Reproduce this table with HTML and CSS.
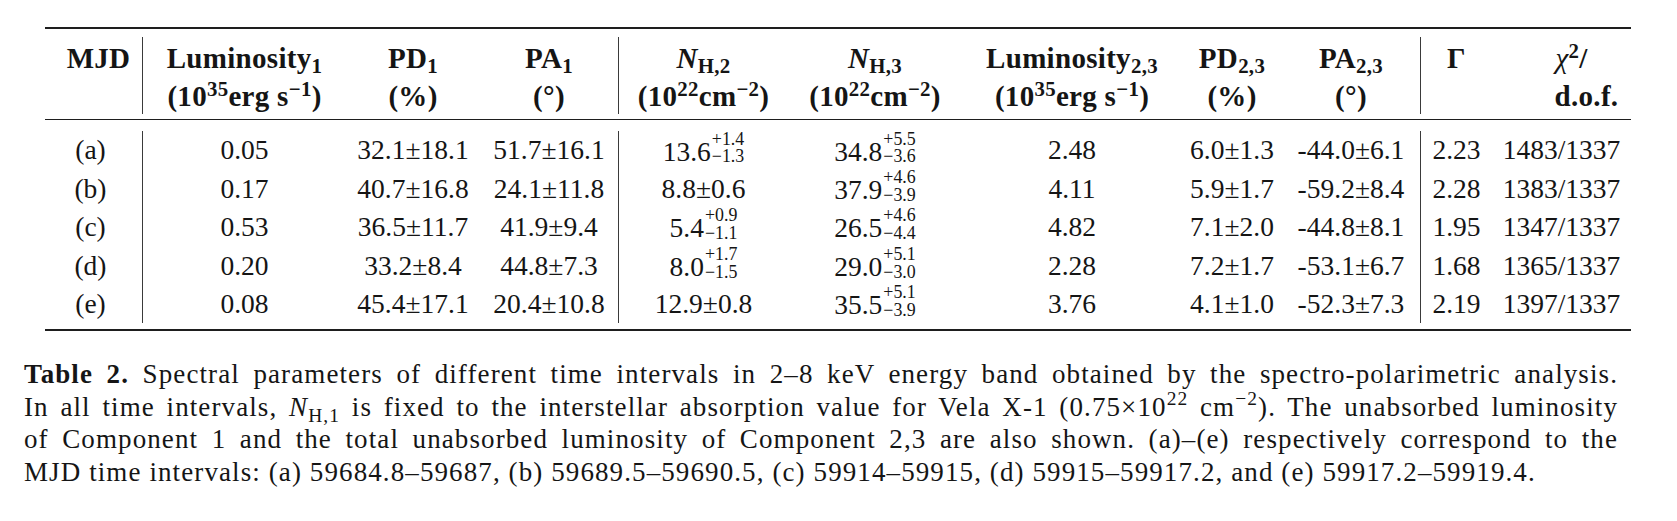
FILE: index.html
```html
<!DOCTYPE html>
<html>
<head>
    <meta name="viewport" content="width=device-width, initial-scale=1">
    <title>Table 2</title>
    <link rel="stylesheet" href="styles.css">
</head>
<body>
    <div class="page">
        <table class="data-table">
            <colgroup>
                <col style="width: 97px">
                <col style="width: 204px">
                <col style="width: 134px">
                <col style="width: 138px">
                <col style="width: 170px">
                <col style="width: 174px">
                <col style="width: 220px">
                <col style="width: 100px">
                <col style="width: 138px">
                <col style="width: 72px">
                <col style="width: 139px">
            </colgroup>
            <thead>
                <tr class="rule-row"><td colspan="11"><div class="rule rule-top"></div></td></tr>
                <tr class="head-1">
                    <th class="mjd-head">MJD</th>
                    <th class="sep">Luminosity<sub>1</sub></th>
                    <th>PD<sub>1</sub></th>
                    <th>PA<sub>1</sub></th>
                    <th class="sep"><i>N</i><sub>H,2</sub></th>
                    <th><i>N</i><sub>H,3</sub></th>
                    <th>Luminosity<sub>2,3</sub></th>
                    <th>PD<sub>2,3</sub></th>
                    <th>PA<sub>2,3</sub></th>
                    <th class="sep">&Gamma;</th>
                    <th class="chi-head"><i class="chi">&chi;</i><sup>2</sup>/</th>
                </tr>
                <tr class="head-2">
                    <th></th>
                    <th class="sep">(10<sup>35</sup>erg s<sup>&minus;1</sup>)</th>
                    <th>(%)</th>
                    <th>(&deg;)</th>
                    <th class="sep">(10<sup>22</sup>cm<sup>&minus;2</sup>)</th>
                    <th>(10<sup>22</sup>cm<sup>&minus;2</sup>)</th>
                    <th>(10<sup>35</sup>erg s<sup>&minus;1</sup>)</th>
                    <th>(%)</th>
                    <th>(&deg;)</th>
                    <th class="sep"></th>
                    <th class="dof-head">d.o.f.</th>
                </tr>
                <tr class="rule-row"><td colspan="11"><div class="rule rule-mid"></div></td></tr>
            </thead>
            <tbody>
                <tr>
                    <td class="mjd">(a)</td>
                    <td class="sep">0.05</td>
                    <td>32.1&plusmn;18.1</td>
                    <td>51.7&plusmn;16.1</td>
                    <td class="sep">13.6<span class="err"><span>+1.4</span><span>&minus;1.3</span></span></td>
                    <td>34.8<span class="err"><span>+5.5</span><span>&minus;3.6</span></span></td>
                    <td>2.48</td>
                    <td>6.0&plusmn;1.3</td>
                    <td>-44.0&plusmn;6.1</td>
                    <td class="sep">2.23</td>
                    <td>1483/1337</td>
                </tr>
                <tr>
                    <td class="mjd">(b)</td>
                    <td class="sep">0.17</td>
                    <td>40.7&plusmn;16.8</td>
                    <td>24.1&plusmn;11.8</td>
                    <td class="sep">8.8&plusmn;0.6</td>
                    <td>37.9<span class="err"><span>+4.6</span><span>&minus;3.9</span></span></td>
                    <td>4.11</td>
                    <td>5.9&plusmn;1.7</td>
                    <td>-59.2&plusmn;8.4</td>
                    <td class="sep">2.28</td>
                    <td>1383/1337</td>
                </tr>
                <tr>
                    <td class="mjd">(c)</td>
                    <td class="sep">0.53</td>
                    <td>36.5&plusmn;11.7</td>
                    <td>41.9&plusmn;9.4</td>
                    <td class="sep">5.4<span class="err"><span>+0.9</span><span>&minus;1.1</span></span></td>
                    <td>26.5<span class="err"><span>+4.6</span><span>&minus;4.4</span></span></td>
                    <td>4.82</td>
                    <td>7.1&plusmn;2.0</td>
                    <td>-44.8&plusmn;8.1</td>
                    <td class="sep">1.95</td>
                    <td>1347/1337</td>
                </tr>
                <tr>
                    <td class="mjd">(d)</td>
                    <td class="sep">0.20</td>
                    <td>33.2&plusmn;8.4</td>
                    <td>44.8&plusmn;7.3</td>
                    <td class="sep">8.0<span class="err"><span>+1.7</span><span>&minus;1.5</span></span></td>
                    <td>29.0<span class="err"><span>+5.1</span><span>&minus;3.0</span></span></td>
                    <td>2.28</td>
                    <td>7.2&plusmn;1.7</td>
                    <td>-53.1&plusmn;6.7</td>
                    <td class="sep">1.68</td>
                    <td>1365/1337</td>
                </tr>
                <tr>
                    <td class="mjd">(e)</td>
                    <td class="sep">0.08</td>
                    <td>45.4&plusmn;17.1</td>
                    <td>20.4&plusmn;10.8</td>
                    <td class="sep">12.9&plusmn;0.8</td>
                    <td>35.5<span class="err"><span>+5.1</span><span>&minus;3.9</span></span></td>
                    <td>3.76</td>
                    <td>4.1&plusmn;1.0</td>
                    <td>-52.3&plusmn;7.3</td>
                    <td class="sep">2.19</td>
                    <td>1397/1337</td>
                </tr>
                <tr class="rule-row"><td colspan="11"><div class="rule rule-bottom"></div></td></tr>
            </tbody>
        </table>

        <p class="caption">
            <span class="line"><b>Table 2.</b> Spectral parameters of different time intervals in 2&ndash;8 keV energy band obtained by the spectro-polarimetric analysis.</span>
            <span class="line">In all time intervals, <i>N</i><sub>H,1</sub> is fixed to the interstellar absorption value for Vela X-1 (0.75&times;10<sup>22</sup> cm<sup>&minus;2</sup>). The unabsorbed luminosity</span>
            <span class="line">of Component 1 and the total unabsorbed luminosity of Component 2,3 are also shown. (a)&ndash;(e) respectively correspond to the</span>
            <span class="line last">MJD time intervals: (a) 59684.8&ndash;59687, (b) 59689.5&ndash;59690.5, (c) 59914&ndash;59915, (d) 59915&ndash;59917.2, and (e) 59917.2&ndash;59919.4.</span>
        </p>
    </div>
</body>
</html>
```

FILE: styles.css
```css
body {
    margin: 0;
    padding: 0;
    background-color: #ffffff;
    color: #151515;
    font-family: "Liberation Serif", "Times New Roman", serif;
}

.page {
    padding-top: 27px;
}

.data-table {
    margin-left: 45px;
    width: 1586px;
    table-layout: fixed;
    border-collapse: separate;
    border-spacing: 0;
    font-size: 27.5px;
}

.data-table th,
.data-table td {
    padding: 0;
    text-align: center;
    white-space: nowrap;
    line-height: 1;
}

.data-table .sep {
    border-left: 1px solid #3a3a3a;
}

.data-table .rule-row td {
    padding: 0;
    height: auto;
    vertical-align: top;
}

.rule {
    border-top: 2px solid #1e1e1e;
}

.rule-top {
    margin-bottom: 8px;
}

.rule-mid {
    border-top-width: 1px;
    margin-top: 5px;
    margin-bottom: 11px;
}

.rule-bottom {
    margin-top: 6px;
}

.head-1 th,
.head-2 th {
    font-size: 29px;
    font-weight: bold;
    letter-spacing: 0.3px;
    vertical-align: middle;
}

.head-1 th {
    height: 42px;
}

.head-2 th {
    height: 35px;
}

.mjd-head {
    padding-left: 10px !important;
}

.chi-head {
    padding-left: 20px !important;
}

.chi {
    font-weight: normal;
}

.dof-head {
    padding-left: 50px !important;
}

.data-table sub,
.data-table sup {
    font-size: 0.72em;
    line-height: 0;
}

.data-table sub {
    vertical-align: -0.25em;
}

.data-table sup {
    vertical-align: 0.5em;
}

.data-table tbody td {
    height: 38.4px;
    vertical-align: middle;
}

.data-table .mjd {
    padding-right: 6px;
}

.err {
    display: inline-block;
    vertical-align: -0.12em;
    font-size: 0.65em;
    line-height: 1;
    text-align: left;
    margin: -5px 0 -3px 1px;
}

.err span {
    display: block;
}

.caption {
    margin: 27px 0 0 24px;
    width: 1594px;
    font-size: 27px;
    line-height: 32.7px;
    letter-spacing: 1.1px;
}

.caption .line {
    display: block;
    white-space: nowrap;
    text-align: justify;
    text-align-last: justify;
}

.caption .line.last {
    text-align-last: left;
}

.caption sub,
.caption sup {
    font-size: 0.72em;
    line-height: 0;
}

.caption sub {
    vertical-align: -0.3em;
}

.caption sup {
    vertical-align: 0.55em;
}
```
